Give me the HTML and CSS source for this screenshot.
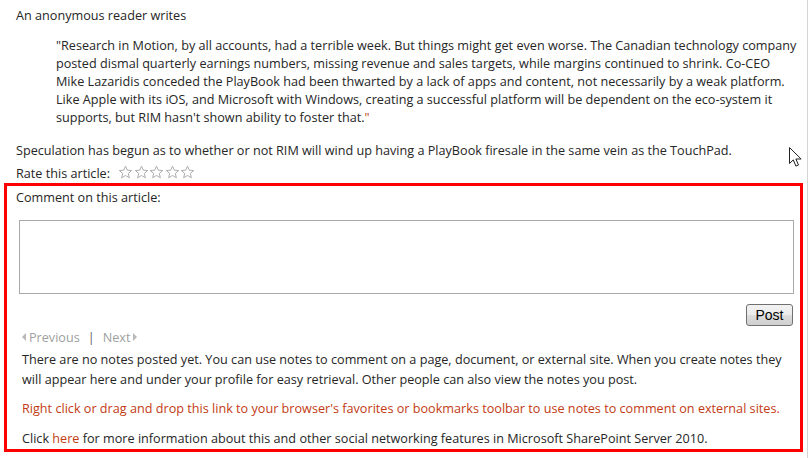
FILE: index.html
```html
<!DOCTYPE html>
<html>
<head>
<meta charset="utf-8">
<link rel="stylesheet" href="styles.css">
</head>
<body>
<div class="page">
  <div class="article">
    <p class="intro">An anonymous reader writes</p>
    <blockquote class="quote">"Research in Motion, by all accounts, had a terrible week. But things might get even worse. The Canadian technology company<br>posted dismal quarterly earnings numbers, missing revenue and sales targets, while margins continued to shrink. Co-CEO<br>Mike Lazaridis conceded the PlayBook had been thwarted by a lack of apps and content, not necessarily by a weak platform.<br>Like Apple with its iOS, and Microsoft with Windows, creating a successful platform will be dependent on the eco-system it<br>supports, but RIM hasn't shown ability to foster that.<span class="endq">"</span></blockquote>
    <p class="spec">Speculation has begun as to whether or not RIM will wind up having a PlayBook firesale in the same vein as the TouchPad.</p>
    <div class="rate">
      <span>Rate this article:</span>
      <span class="stars">
        <svg viewBox="0 0 16 16" width="15" height="15"><path d="M8 1.2l1.9 4.3 4.7.4-3.6 3.1 1.1 4.6L8 11.2l-4.1 2.4 1.1-4.6L1.4 5.9l4.7-.4z"/></svg>
        <svg viewBox="0 0 16 16" width="15" height="15"><path d="M8 1.2l1.9 4.3 4.7.4-3.6 3.1 1.1 4.6L8 11.2l-4.1 2.4 1.1-4.6L1.4 5.9l4.7-.4z"/></svg>
        <svg viewBox="0 0 16 16" width="15" height="15"><path d="M8 1.2l1.9 4.3 4.7.4-3.6 3.1 1.1 4.6L8 11.2l-4.1 2.4 1.1-4.6L1.4 5.9l4.7-.4z"/></svg>
        <svg viewBox="0 0 16 16" width="15" height="15"><path d="M8 1.2l1.9 4.3 4.7.4-3.6 3.1 1.1 4.6L8 11.2l-4.1 2.4 1.1-4.6L1.4 5.9l4.7-.4z"/></svg>
        <svg viewBox="0 0 16 16" width="15" height="15"><path d="M8 1.2l1.9 4.3 4.7.4-3.6 3.1 1.1 4.6L8 11.2l-4.1 2.4 1.1-4.6L1.4 5.9l4.7-.4z"/></svg>
      </span>
    </div>
  </div>
  <div class="comments">
    <div class="label">Comment on this article:</div>
    <textarea class="box"></textarea>
    <div class="actions"><button class="post">Post</button></div>
    <div class="pager">
      <span class="tri tri-left"></span><span>Previous</span>
      <span class="sep">|</span>
      <span>Next</span><span class="tri tri-right"></span>
    </div>
    <p class="notes">There are no notes posted yet. You can use notes to comment on a page, document, or external site. When you create notes they will appear here and under your profile for easy retrieval. Other people can also view the notes you post.</p>
    <p class="notes link">Right click or drag and drop this link to your browser's favorites or bookmarks toolbar to use notes to comment on external sites.</p>
    <p class="notes">Click <span class="here">here</span> for more information about this and other social networking features in Microsoft SharePoint Server 2010.</p>
  </div>
  <svg class="cursor" viewBox="0 0 13 21" width="13" height="21"><path d="M0.5 0.5v16l3.8-3.6 2.6 6.2 2.6-1.1-2.6-6h5.2z" fill="#fff" stroke="#222" stroke-width="1"/></svg>
</div>
</body>
</html>
```
FILE: styles.css
```css
html, body {
  margin: 0;
  padding: 0;
  background: #fff;
}
.page {
  position: relative;
  width: 808px;
  height: 458px;
  border-right: 1px solid #d4d4d4;
  box-sizing: border-box;
  font-family: "Open Sans", "Noto Sans", sans-serif;
  font-size: 12.65px;
  line-height: 18px;
  color: #262626;
  overflow: hidden;
}
.article {
  padding: 6px 0 0 16px;
}
.intro {
  margin: 0;
}
.quote {
  margin: 12px 0 0 40px;
  white-space: nowrap;
}
.endq {
  color: #c23b14;
}
.spec {
  margin: 15px 0 0 0;
}
.rate {
  display: flex;
  align-items: center;
  gap: 8px;
  margin-top: 5px;
  height: 18px;
}
.stars {
  display: flex;
  gap: 0.6px;
  margin-top: -2px;
}
.stars svg path {
  fill: #fff;
  stroke: #a8a8a8;
  stroke-width: 1;
  stroke-linejoin: round;
}
.comments {
  margin: 1px 0 0 4px;
  width: 799px;
  height: 269px;
  box-sizing: border-box;
  border: 3px solid #f00;
  padding: 2px 6px 0 9px;
}
.label {
  height: 18px;
}
.box {
  display: block;
  margin: 14px 0 0 3px;
  width: 775px;
  height: 74px;
  box-sizing: border-box;
  border: 1px solid #a9a9a9;
  resize: none;
  padding: 2px;
}
.actions {
  display: flex;
  justify-content: flex-end;
  margin-top: 10px;
  padding-right: 1px;
}
.post {
  width: 47px;
  height: 22px;
  padding: 0;
  font-family: "Liberation Sans", Arial, sans-serif;
  font-size: 14px;
  color: #000;
  border: 1px solid #707070;
  border-radius: 3px;
  background: linear-gradient(#f2f2f2 0%, #ebebeb 50%, #dddddd 51%, #cfcfcf 100%);
}
.pager {
  display: flex;
  align-items: center;
  margin: 2px 0 0 6px;
  color: #a0a0a0;
  height: 18px;
}
.sep {
  margin: 0 8px 0 8px;
  color: #666;
}
.tri {
  width: 0;
  height: 0;
  border-top: 4px solid transparent;
  border-bottom: 4px solid transparent;
}
.tri-left {
  border-right: 4px solid #b8b8b8;
  margin-right: 3px;
}
.tri-right {
  border-left: 4px solid #b8b8b8;
  margin-left: 3px;
}
.notes {
  margin: 4px 0 0 6px;
  line-height: 19.5px;
}
.notes + .notes {
  margin-top: 10px;
}
.link, .here {
  color: #c23b14;
}
.cursor {
  position: absolute;
  left: 789px;
  top: 147px;
}
```
